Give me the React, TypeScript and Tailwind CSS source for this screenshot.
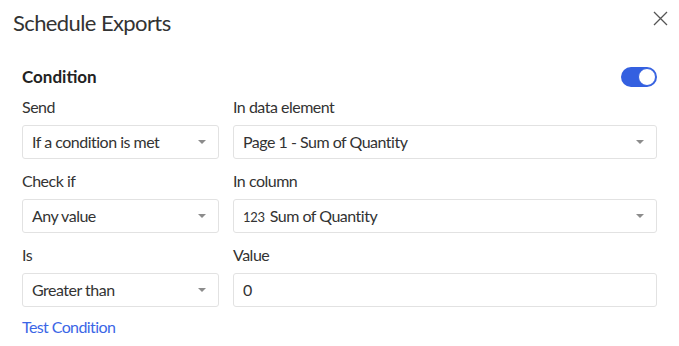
import React from 'react';

const font = { fontFamily: 'Lato, "Noto Sans", sans-serif' };

const Caret = () => (
    <svg width="8" height="4" viewBox="0 0 8 4" className="shrink-0">
        <path d="M0 0 L8 0 L4 4 Z" fill="#8c8c8c" />
    </svg>
);

const SelectBox: React.FC<{ value: React.ReactNode }> = ({ value }) => (
    <div className="h-[34px] flex items-center justify-between pl-[9px] pr-[12px] border border-[#e2e2e2] rounded-[3px] bg-white">
        <span className="text-[16px] tracking-[-0.5px] text-[#333333] leading-none">{value}</span>
        <Caret />
    </div>
);

const Field: React.FC<{ label: string; children: React.ReactNode }> = ({ label, children }) => (
    <div className="flex flex-col">
        <label className="text-[16px] tracking-[-0.5px] leading-[24px] text-[#333333] mb-[6px]">{label}</label>
        {children}
    </div>
);

export default function App() {
    return (
        <div className="w-[679px] h-[346px] bg-white overflow-hidden" style={font}>
            <div className="h-[45px] flex items-center justify-between pl-[13px] pr-[11px]">
                <h1 className="text-[22px] tracking-[-0.6px] text-[#333333] font-normal">Schedule Exports</h1>
                <svg width="15" height="15" viewBox="0 0 15 15" className="mt-[-8px]">
                    <path d="M1 1 L14 14 M14 1 L1 14" stroke="#555555" strokeWidth="1.3" />
                </svg>
            </div>
            <div className="px-[22px]">
                <div className="mt-[21px] h-[22px] flex items-center justify-between">
                    <h2 className="text-[17px] font-bold text-[#222222]">Condition</h2>
                    <div className="w-[36px] h-[20px] rounded-full bg-[#3460e0] flex items-center justify-end pr-[1px]">
                        <div className="w-[18px] h-[18px] rounded-full bg-white border border-[#3460e0]" />
                    </div>
                </div>
                <div className="mt-[7px] grid grid-cols-[197px_1fr] gap-x-[14px] gap-y-[10px]">
                    <Field label="Send"><SelectBox value="If a condition is met" /></Field>
                    <Field label="In data element"><SelectBox value="Page 1 - Sum of Quantity" /></Field>
                    <Field label="Check if"><SelectBox value="Any value" /></Field>
                    <Field label="In column">
                        <SelectBox
                            value={
                                <span className="flex items-baseline">
                                    <span className="text-[13px] tracking-[-0.3px] mr-[5px]">123</span>
                                    <span>Sum of Quantity</span>
                                </span>
                            }
                        />
                    </Field>
                    <Field label="Is"><SelectBox value="Greater than" /></Field>
                    <Field label="Value">
                        <div className="h-[34px] flex items-center pl-[9px] border border-[#e2e2e2] rounded-[3px]">
                            <span className="text-[16px] text-[#333333] leading-none">0</span>
                        </div>
                    </Field>
                </div>
                <div className="mt-[8px] text-[16px] tracking-[-0.6px] leading-[24px] text-[#3b66e6]">Test Condition</div>
            </div>
        </div>
    );
}
